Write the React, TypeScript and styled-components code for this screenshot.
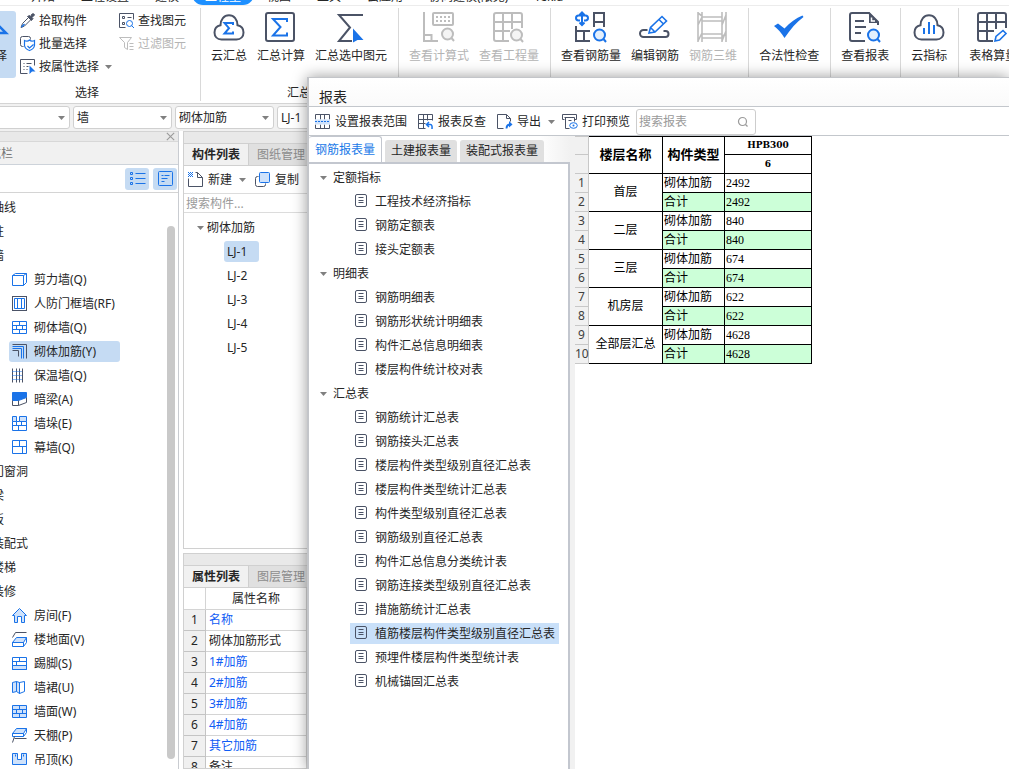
import React from "react";
import styled, { createGlobalStyle, css } from "styled-components";

const ink = "#4b5366";
const blue = "#1a73e8";
const pale = "#cfe2fb";
const mute = "#bdbdbd";

const GlobalStyle = createGlobalStyle`
  * { box-sizing: border-box; }
  body {
    margin: 0;
    background: #fff;
    color: #262626;
    font-family: "Noto Sans", "Noto Sans CJK SC", sans-serif;
    font-size: 12px;
    line-height: 16px;
  }
  button, input, select { font: inherit; color: inherit; }
  button { border: 0; padding: 0; background: none; white-space: nowrap; }
  button:disabled { color: #b4b4b4; }
  ul { list-style: none; margin: 0; padding: 0; }
  svg { display: block; flex: none; overflow: visible; }
`;

/* ---------- icons ---------- */

const cloud = (
  <path d="M9.500 28.500C5 28.500 2.500 25.300 2.500 21.500C2.500 17.500 5 15 8.500 14.300C8.500 8.300 12 4.300 17 4.300C22 4.300 25.500 8.300 25.500 14.300C29 15 31.500 17.500 31.500 21.500C31.500 25.300 29 28.500 24.500 28.500Z" />
);

const large: Record<string, React.ReactNode> = {
  cloudSum: (
    <g stroke={ink} strokeWidth="2">
      {cloud}
      <path stroke={blue} d="M21 14V12H12.500L17 17.200L12.500 22.500H21V20.500" />
    </g>
  ),
  sum: (
    <g stroke={ink} strokeWidth="2">
      <rect x="2" y="2" width="28" height="28" rx="2" />
      <path stroke={blue} d="M23 11V8H9L16.500 16L9 24.500H23V21.500" />
    </g>
  ),
  sumPick: (
    <g stroke={ink} strokeWidth="2">
      <path d="M29 4H5L16 16.500L5 30H18" />
      <path stroke="none" fill={blue} d="M19 17.500L29.500 29H23.500L19 31.500Z" />
    </g>
  ),
  formula: (
    <g stroke={mute} strokeWidth="2">
      <path d="M2 1V30H16M2 24H9.500V30" />
      <rect x="11" y="2" width="20" height="12" rx="1" />
      <path strokeDasharray="2 2" d="M14 6H29M14 10H29" />
      <circle cx="25.500" cy="23" r="5.500" fill="#f4f4f4" />
      <path d="M29.500 27L32 30" />
    </g>
  ),
  quantity: (
    <g stroke={mute} strokeWidth="2">
      <path d="M17 30H4A2 2 0 0 1 2 28V4A2 2 0 0 1 4 2H28A2 2 0 0 1 30 4V17M2 11H30M2 20H18M11 2V30M20 2V18" />
      <circle cx="24.500" cy="24" r="5.500" fill="#f4f4f4" />
      <path d="M28.500 28L31 31" />
    </g>
  ),
  rebar: (
    <g stroke={ink} strokeWidth="2">
      <path d="M2 15V30H16M2 20H16M10 20V30M20 16V2H30V16M20 11H30" />
      <path stroke={blue} d="M6 9.500H4.500A2.500 2.500 0 0 1 4.500 4.500H11.500A2.500 2.500 0 0 1 11.500 9.500H10M8 2V13M5.500 4L8 1.500L10.500 4M5.500 11.500L8 14L10.500 11.500" />
      <circle stroke={blue} cx="25.500" cy="24" r="5.500" fill="#e3effd" />
      <path stroke={blue} d="M29.500 28L32 31" />
    </g>
  ),
  editRebar: (
    <g stroke={ink} strokeWidth="2">
      <path d="M9.500 19H5.500A3.200 3.200 0 0 0 5.500 26H27.500A3 3 0 0 0 27.500 20H25.500" />
      <path stroke={blue} fill="#fff" strokeWidth="1.600" d="M11 22L12.500 16.500L24 5.500L28.500 10L17 21ZM21 8.500L25.500 13M12.500 16.500L17 21" />
    </g>
  ),
  rebar3d: (
    <g stroke={mute} strokeWidth="1.600">
      <path d="M2 1V31M6 1V31M26 1V31M30 1V31M6 6H26M6 10H26M6 23H26M6 27H26M2 14L6 6M2 30L6 22M26 14L30 4M26 30L30 20M6 5L2 2M30 22L26 26" />
    </g>
  ),
  check: <path fill={blue} d="M2 15L6 12.500L12.500 17.500C18 11.500 24 7 30.500 4.500L31.500 6C24.500 11 18.500 18 12.500 27C9.500 22 6 18 2 15Z" />,
  report: (
    <g stroke={ink} strokeWidth="2">
      <path d="M17 30H4A2 2 0 0 1 2 28V4A2 2 0 0 1 4 2H21L30 11V14M7 10H16M7 16H18M7 22H13" />
      <path fill={ink} stroke="none" d="M21 1L31 12H21Z" />
      <path stroke="#fff" strokeWidth="1.500" d="M23.500 6.500V10H27" />
      <circle stroke={blue} cx="25.500" cy="24" r="5.500" fill="#e3effd" />
      <path stroke={blue} d="M29.500 28L32 31" />
    </g>
  ),
  cloudIndex: (
    <g stroke={ink} strokeWidth="2">
      {cloud}
      <path stroke={blue} d="M12 17V23M17 11V23M22 14V23" />
    </g>
  ),
  sheet: (
    <g stroke={ink} strokeWidth="2">
      <path d="M17 30H4A2 2 0 0 1 2 28V4A2 2 0 0 1 4 2H28A2 2 0 0 1 30 4V17M2 11H30M2 20H18M11 2V30M20 2V18" />
      <path stroke={blue} fill="#fff" strokeWidth="1.600" d="M19 30L20 25.500L27 19.500L30 22.500L23.500 29Z" />
    </g>
  ),
  pointer: <path stroke={blue} strokeWidth="2.500" d="M8 2L28 22H17L8 30Z" />,
};

const brick = "M1 2H15V14H1ZM1 6H15M1 10H15M8 2V6M5 6V10M11 6V10M8 10V14";

const small: Record<string, React.ReactNode> = {
  dropper: (
    <g stroke={ink}>
      <path fill={ink} d="M8 4L10 3L11 4L12.500 1.500Q14.500 0.500 15 2.500L12.500 5L13.500 6L12 8Z" />
      <path d="M9 5L3 11L1.500 15L5 13.500L11 7.500" />
      <path stroke={blue} strokeWidth="1.500" d="M2 14.500L5 11.500" />
    </g>
  ),
  batch: (
    <g>
      <path stroke={ink} d="M4 11H3A2 2 0 0 1 1 9V3A2 2 0 0 1 3 1H9A2 2 0 0 1 11 3V4" />
      <path stroke={blue} strokeWidth="1.200" d="M5 5Q8 6.500 10 4.500Q12 6.500 15 5V10Q14.500 13.500 10 15Q5.500 13.500 5 10ZM8 10.500L10 12.500L14 9" />
    </g>
  ),
  byProp: (
    <g stroke={ink}>
      <path d="M8 15H1V1H15V7M4 5H5M7 5H12M4 8H5M7 8H9M4 11H5M7 11H8" />
      <path fill={blue} stroke="none" d="M10 7L16 13H12.500L10 15.500Z" />
    </g>
  ),
  find: (
    <g stroke={ink}>
      <path d="M7 15H1V1H15V7M4 4H6V6H4ZM9 5H13M4 10H6V12H4Z" />
      <circle cx="11" cy="11" r="3" stroke={blue} />
      <path stroke={blue} d="M13 13L15.500 15.500" />
    </g>
  ),
  filter: <path stroke={mute} d="M1 2H13L9 7V14L6 12V7ZM11 8H15M11 11H15M11 14H15" />,
  range: (
    <g stroke={ink}>
      <path d="M1 6V1H15V6M6 1V6M10 1V6M1 11V15H15V11M6 11V15M10 11V15" />
      <path fill={pale} stroke="none" d="M0.500 6H15.500V11H0.500Z" />
      <path stroke={blue} strokeDasharray="2 1" d="M0.500 8H15.500" />
    </g>
  ),
  lookback: (
    <g stroke={ink}>
      <path d="M8 15H1V1H15V7M1 6H15M1 10H8M6 1V15M10 1V7" />
      <path stroke={blue} strokeWidth="1.500" d="M9 11H13Q15 11 14.500 15.500M11.500 8.500L9 11L11.500 13.500" />
    </g>
  ),
  exportDoc: (
    <g stroke={ink}>
      <path d="M7 15H1V1H10L14 5V8M10 1V5H14" />
      <path stroke={blue} strokeWidth="1.800" d="M10 15Q10 11.500 13 11" />
      <path fill={blue} d="M12.500 7.500L16 11L12.500 14Z" stroke="none" />
    </g>
  ),
  print: (
    <g stroke={ink}>
      <path d="M3 6H1V1H15V6H13M3 4H13V8M4 4V15H8M7 7H10" />
      <ellipse cx="12" cy="12" rx="3.800" ry="2.800" stroke={blue} fill="#fff" />
      <circle cx="12" cy="12" r="1" fill={blue} stroke="none" />
    </g>
  ),
  newDoc: (
    <g stroke={ink}>
      <path d="M1 7V15H15V6L10 1H8M10 1V6H15" />
      <path stroke={blue} strokeDasharray="1 1" d="M0.500 1H5.500M1.500 2H5.500M0.500 3H5.500M1.500 4H5.500M0.500 5H5.500" />
    </g>
  ),
  copy: (
    <g>
      <path stroke={ink} d="M4 5H3A2 2 0 0 0 1 7V13A2 2 0 0 0 3 15H9A2 2 0 0 0 11 13V12" />
      <rect x="5" y="1" width="10" height="10" rx="1" stroke={blue} fill={pale} />
    </g>
  ),
  lens: (
    <g stroke="#9a9a9a" strokeWidth="1.200">
      <circle cx="7" cy="8" r="4" />
      <path d="M10 11L12 13" />
    </g>
  ),
  leaf: (
    <g stroke={ink}>
      <rect x="3" y="1" width="11" height="12" rx="1.500" />
      <path d="M6 4H11M6 7H11M6 9H11" />
    </g>
  ),
  list: <path stroke={blue} d="M6 3H16M6 8H16M6 13H16M1 2H3V4H1ZM1 7H3V9H1ZM1 12H3V14H1Z" />,
  detail: (
    <g stroke={blue}>
      <rect x="1" y="1" width="14" height="14" rx="1" />
      <path d="M4 5H6M7 5H12M4 8H10M4 11H7" />
    </g>
  ),
  shear: <path stroke={blue} d="M1 4H12V14H1ZM1 4L4 2H15V11L12 14M12 4L15 2" />,
  doorWall: (
    <g>
      <rect x="1" y="1" width="14" height="14" stroke={ink} />
      <path stroke={blue} d="M3 3H13V13H3ZM6 3V13M10 3V13" />
    </g>
  ),
  brick: <path stroke={blue} d={brick} />,
  tie: (
    <g>
      <path stroke={ink} d="M1 1H15V15M1 7H7V13" />
      <path stroke={blue} d="M1 3H12V15M1 5H10V15" />
    </g>
  ),
  insulate: (
    <g>
      <path stroke={ink} d="M1 1V15M5 1V15M8 1V15M11 1V15" />
      <path stroke={blue} strokeDasharray="1 1" d="M1 4H11M1 8H11M1 12H11" />
    </g>
  ),
  beam: (
    <g>
      <path fill={blue} stroke={blue} d="M1 1H15V6L7 9H1Z" />
      <path stroke={ink} d="M1 9V14H7L15 11V6M7 9V14" />
    </g>
  ),
  pier: (
    <g stroke={blue}>
      <path fill={pale} d="M1 1H5V6H1ZM8 1H15V6H8Z" />
      <path d="M1 6V15H15V6M5 6H8M1 10H15M5 6V10M10 6V10M7 10V15" />
    </g>
  ),
  curtain: <path stroke={blue} d="M1 1H15V14H1ZM1 7H15M8 1V7M11 7V14" />,
  house: <path stroke={blue} fill={pale} d="M1 8L8 1L15 8H13V15H10V9H6V15H3V8Z" />,
  floor: (
    <g>
      <path stroke={ink} d="M1 6L4 1H15" />
      <path stroke={blue} fill={pale} d="M1 11L5 6H15L12 11Z" />
      <path stroke={blue} d="M1 11H12V15H1ZM12 15L15 11V6" />
    </g>
  ),
  skirting: (
    <g stroke={blue}>
      <path fill={pale} d="M1 10H15V14H1Z" />
      <path d="M1 2H15V14H1ZM1 6H15M8 2V6M5 6V10" />
    </g>
  ),
  dado: (
    <g stroke={blue}>
      <path fill={pale} d="M1 3L5 2L8 3V14L5 12L1 13Z" />
      <path d="M5 2V12M8 3L13 2V12L8 14Z" />
    </g>
  ),
  face: <path stroke={blue} fill={pale} d={brick} />,
  ceiling: (
    <g>
      <path stroke={blue} fill={pale} d="M1 6L5 1H15L12 6Z" />
      <path stroke={blue} d="M1 6H12V9H1ZM12 9L15 5V1" />
      <path stroke={ink} d="M3 9L1 15M3 11H15" />
    </g>
  ),
  hung: <path stroke={blue} fill={pale} d="M1 2H6V8H10V2H15V13H1ZM4 3V5M12 3V5" />,
  close: <path stroke="#9a9a9a" strokeWidth="1.500" d="M3 3L13 13M13 3L3 13" />,
};

function Icon({ name, size = 15 }: { name: string; size?: number }) {
  const big = name in large;
  return (
    <svg width={big ? 32 : size} height={big ? 32 : size} viewBox={big ? "1 0 32 32" : "0.5 0.5 15 15"} fill="none" aria-hidden="true">
      {big ? large[name] : small[name]}
    </svg>
  );
}

const CaretSvg = styled.svg`
  margin: 0 -4px 0 2px;
`;
const Caret = () => (
  <CaretSvg width="7" height="4" viewBox="0 0 7 4" aria-hidden="true">
    <path fill="#808080" d="M0 0H7L3.500 4Z" />
  </CaretSvg>
);

/* ---------- shell ---------- */

const Shell = styled.div`
  position: relative;
  display: flex;
  flex-direction: column;
  height: 100vh;
  overflow: hidden;
`;

const MenuBar = styled.nav`
  display: flex;
  align-items: flex-end;
  flex: none;
  height: 6px;
  padding-left: 18px;
  overflow: hidden;
  border-bottom: 1px solid #ececec;
`;

const MenuItem = styled.button<{ $active?: boolean }>`
  flex: none;
  height: 22px;
  padding: 6px 13px 0;
  ${(p) => p.$active && css`
    border-radius: 11px;
    background: #1e90ff;
    color: #fff;
  `}
`;

const Ribbon = styled.header`
  display: flex;
  flex: none;
  height: 98px;
  padding: 2px 0;
  overflow: hidden;
  border-bottom: 1px solid #d4d4d4;
`;

const RibbonGroup = styled.section<{ $first?: boolean }>`
  display: flex;
  flex-direction: column;
  flex: none;
  padding: 0 11px 0 10px;
  border-right: 1px solid #d9d9d9;
  ${(p) => p.$first && css`
    width: 227px;
    margin-left: -26px;
    padding: 0;
  `}
`;

const RibbonButtons = styled.div`
  display: flex;
  flex: 1;
  gap: 10px;
`;

const RibbonCaption = styled.div`
  height: 16px;
  text-align: center;
`;

const BigButton = styled.button<{ $selected?: boolean }>`
  display: flex;
  flex-direction: column;
  align-items: center;
  gap: 5px;
  height: 67px;
  margin-top: 3px;
  ${(p) => p.$selected && css`
    width: 42px;
    border-radius: 3px;
    background: #c5dbf3;
  `}
`;

const SmallGrid = styled.div`
  display: grid;
  grid-template-columns: 99px auto;
  grid-auto-rows: 23px;
  margin-left: -6px;
  padding-top: 1px;
`;

const SmallButton = styled.button`
  display: flex;
  align-items: center;
  gap: 4px;
`;

const ComboRow = styled.div`
  display: flex;
  flex: none;
  gap: 3px;
  height: 27px;
  padding: 2px 0;
  margin-left: -29px;
  background: #f1f1f1;
`;

const Combo = styled.label`
  display: grid;
  align-items: center;
  flex: none;
  width: 99px;
  border: 1px solid #d0d0d0;
  border-radius: 3px;
  background: #fff;

  select {
    grid-area: 1 / 1;
    appearance: none;
    height: 20px;
    padding: 0 3px;
    border: 0;
    background: none;
  }
  svg {
    grid-area: 1 / 1;
    justify-self: end;
    margin: 0 4px 0 0;
    pointer-events: none;
  }
`;

const Workspace = styled.main`
  display: flex;
  flex: 1;
  gap: 4px;
  min-height: 0;
`;

/* ---------- navigation ---------- */

const Nav = styled.aside`
  display: flex;
  flex-direction: column;
  flex: none;
  width: 179px;
  border-top: 1px solid #d4d4d4;
  border-right: 1px solid #c9ccd1;
`;

const NavStrip = styled.div`
  display: flex;
  justify-content: flex-end;
  align-items: center;
  flex: none;
  height: 10px;
  padding-right: 2px;
  background: #e9e9e9;
  border-bottom: 1px solid #d8d8d8;
`;

const NavTitle = styled.div`
  flex: none;
  height: 23px;
  padding-top: 4px;
  background: #f1f1f1;
  border-bottom: 1px solid #cdd3da;
  color: #777;
`;

const Offscreen = styled.span<{ $by: number }>`
  margin-left: -${(p) => p.$by}px;
`;

const NavTools = styled.div`
  display: flex;
  justify-content: flex-end;
  align-items: center;
  flex: none;
  gap: 4px;
  height: 28px;
  padding-right: 1px;
  border-bottom: 1px solid #d4d4d4;
`;

const ToggleButton = styled.button`
  display: grid;
  place-items: center;
  width: 24px;
  height: 22px;
  border-radius: 3px;
  background: #c5dbf3;
`;

const NavScroll = styled.div`
  display: flex;
  flex: 1;
  justify-content: space-between;
  min-height: 0;
  padding: 3px 3px 0 0;
  overflow: hidden;
`;

const NavGroup = styled.li`
  line-height: 24px;
  white-space: nowrap;
`;

const LeafList = styled.ul`
  display: flex;
  flex-direction: column;
  gap: 3px;
  padding: 1px 0 2px;
`;

const NavLeaf = styled.li<{ $selected?: boolean }>`
  display: flex;
  align-items: center;
  gap: 7px;
  min-width: 111px;
  height: 21px;
  margin-left: 9px;
  padding: 0 4px 0 3px;
  border-radius: 3px;
  background: ${(p) => (p.$selected ? "#c5dbf3" : "transparent")};
  white-space: nowrap;
`;

const ScrollThumb = styled.div`
  width: 8px;
  margin: 30px 0 10px;
  border-radius: 4px;
  background: #c9c9c9;
`;

/* ---------- middle panels ---------- */

const Column = styled.div`
  display: flex;
  flex: 1;
  flex-direction: column;
  gap: 4px;
  min-width: 0;
`;

const Panel = styled.section<{ $share: number }>`
  display: flex;
  flex-direction: column;
  flex: ${(p) => p.$share} 1 0;
  min-height: 0;
  overflow: hidden;
  border: 1px solid #d0d0d0;
`;

const PanelStrip = styled.div`
  flex: none;
  height: 12px;
  background: #e9e9e9;
  border-bottom: 1px solid #d0d0d0;
`;

const PanelTabs = styled.div`
  display: flex;
  flex: none;
  height: 22px;
  background: #e0e0e0;
  border-bottom: 1px solid #d0d0d0;
`;

const PanelTab = styled.button<{ $active?: boolean }>`
  padding: 0 8px;
  border-right: 1px solid #cfcfcf;
  color: ${(p) => (p.$active ? "#262626" : "#8c8c8c")};
  font-weight: ${(p) => (p.$active ? 700 : 400)};
  background: ${(p) => (p.$active ? "#f1f1f1" : "#e0e0e0")};
`;

const PanelTools = styled.div`
  display: flex;
  flex: none;
  gap: 13px;
  height: 28px;
  padding-left: 4px;
  border-bottom: 1px solid #dcdcdc;
`;

const ToolButton = styled.button`
  display: flex;
  align-items: center;
  gap: 5px;
`;

const ComponentSearch = styled.input`
  flex: none;
  height: 19px;
  padding: 0 2px;
  border: 0;
  border-bottom: 1px solid #dcdcdc;
  outline: 0;
  &::placeholder { color: #9a9a9a; }
`;

const ComponentTree = styled.ul`
  padding: 3px 0 0 11px;
  line-height: 24px;

  ul { padding-left: 29px; }
`;

const TreeHead = styled.div`
  display: flex;
  align-items: center;
  gap: 7px;
`;

const ComponentLeaf = styled.li<{ $selected?: boolean }>`
  width: 35px;
  height: 21px;
  padding-left: 3px;
  border-radius: 3px;
  line-height: 21px;
  background: ${(p) => (p.$selected ? "#c5dbf3" : "transparent")};
`;

const PropTable = styled.table`
  width: 100%;
  border-spacing: 0;

  th, td {
    height: 21px;
    padding: 0 3px;
    border-bottom: 1px solid #d4d4d4;
    border-right: 1px solid #d4d4d4;
    font-weight: 400;
    text-align: left;
    white-space: nowrap;
  }
  thead th { height: 22px; }
  th:first-child { width: 22px; padding: 0; text-align: center; }
  tbody th { background: #f0f0f0; border-color: #c4c4c4; }
  thead th:nth-child(2) { width: 101px; text-align: center; }
`;

const PropName = styled.td<{ $plain?: boolean }>`
  color: ${(p) => (p.$plain ? "#262626" : "#0f5cf5")};
`;

/* ---------- report window ---------- */

const Dialog = styled.div`
  position: absolute;
  top: 77px;
  right: 0;
  bottom: 0;
  left: 307px;
  display: flex;
  flex-direction: column;
  border: solid #c3c5c9;
  border-width: 1px 0 0 2px;
  background: #fff;
  box-shadow: 0 0 14px rgba(0, 0, 0, 0.4);
`;

const DialogTitle = styled.h1`
  flex: none;
  height: 28px;
  margin: 0;
  padding: 0 10px;
  background: linear-gradient(#fff, #fafafa);
  font-size: 14px;
  font-weight: 400;
  line-height: 38px;
`;

const DialogTools = styled.div`
  display: flex;
  align-items: center;
  flex: none;
  gap: 11px;
  height: 30px;
  padding: 1px 0 0 6px;
  border: solid #c3c7cc;
  border-width: 1px 0;
`;

const SearchBox = styled.label`
  display: flex;
  align-items: center;
  width: 120px;
  height: 26px;
  margin-left: -5px;
  padding: 0 4px 0 2px;
  border: 1px solid #cdcdcd;
  border-radius: 3px;

  input {
    flex: 1;
    min-width: 0;
    padding: 0;
    border: 0;
    outline: 0;
  }
  input::placeholder { color: #9a9a9a; }
`;

const DialogBody = styled.div`
  display: flex;
  flex: 1;
  min-height: 0;
`;

const ReportSide = styled.div`
  display: flex;
  flex-direction: column;
  flex: none;
  width: 266px;
  padding-right: 5px;
  background: #f1f1f1;
`;

const ReportTabs = styled.div`
  display: flex;
  align-items: flex-end;
  flex: none;
  gap: 3px;
  height: 26px;
  background: linear-gradient(90deg, #fff 88%, #f1f1f1);
`;

const ReportTab = styled.button<{ $active?: boolean }>`
  height: 22px;
  padding: 0 6px;
  border-radius: 3px 3px 0 0;
  background: #e0e0e0;
  ${(p) => p.$active && css`
    height: 26px;
    border: solid #c3c7cf;
    border-width: 1px 1px 0 0;
    background: #fff;
    color: #1a7ae8;
  `}
`;

const ReportTree = styled.ul`
  flex: 1;
  padding-top: 2px;
  border: solid #c3c7cf;
  border-width: 2px 2px 0 0;
  background: #fff;
  line-height: 24px;
`;

const ReportHead = styled.div`
  display: flex;
  align-items: center;
  gap: 10px;
  padding-left: 9px;
`;

const ReportLeaf = styled.li<{ $selected?: boolean }>`
  display: flex;
  align-items: center;
  gap: 7px;
  width: 209px;
  height: 21px;
  margin-left: 41px;
  padding-left: 3px;
  background: ${(p) => (p.$selected ? "#c9e0f9" : "transparent")};
  white-space: nowrap;
`;

const ReportTable = styled.table`
  align-self: flex-start;
  border-spacing: 0;
  color: #000;
  font-family: "Liberation Serif", "Noto Sans CJK SC", serif;
  line-height: 16px;

  th, td {
    height: 19px;
    padding: 0 1px 1px;
    border: solid #000;
    border-width: 0 1px 1px 0;
    white-space: nowrap;
  }
  thead tr:first-child > * { border-top-width: 1px; }
  thead th {
    font-family: "DejaVu Serif Condensed", "DejaVu Serif", "Noto Sans CJK SC", serif;
    font-size: 10px;
    text-align: center;
  }
  thead th[rowspan] { font-size: 13px; }
`;

const IndexCell = styled.th`
  && {
    width: 14px;
    min-width: 14px;
    max-width: 14px;
    padding: 0;
    border-color: #c8c8c8;
    background: #f1f1f1;
    color: #404040;
    font-family: "Noto Sans", sans-serif;
    font-weight: 400;
    text-align: center;
  }
`;

const FloorCell = styled.th`
  width: 74px;
  font-weight: 400;
  text-align: center;
`;

const DataCell = styled.td<{ $total?: boolean }>`
  background: ${(p) => (p.$total ? "#ccffd8" : "#fff")};
`;

/* ---------- data ---------- */

const menus = ["开始", "工程设置", "建模", "工程量", "视图", "工具", "云应用", "协同建模(限免)", "Tekla"];

type Tool = [icon: string, label: string, disabled?: boolean];
const ribbonGroups: { caption?: string; tools: Tool[] }[] = [
  { caption: "汇总", tools: [["cloudSum", "云汇总"], ["sum", "汇总计算"], ["sumPick", "汇总选中图元"]] },
  { tools: [["formula", "查看计算式", true], ["quantity", "查看工程量", true]] },
  { tools: [["rebar", "查看钢筋量"], ["editRebar", "编辑钢筋"], ["rebar3d", "钢筋三维", true]] },
  { tools: [["check", "合法性检查"]] },
  { tools: [["report", "查看报表"]] },
  { tools: [["cloudIndex", "云指标"]] },
  { tools: [["sheet", "表格算量"]] },
];

const navTree: { name: string; items?: [string, string][] }[] = [
  { name: "轴线" },
  { name: "柱" },
  {
    name: "墙",
    items: [
      ["shear", "剪力墙(Q)"], ["doorWall", "人防门框墙(RF)"], ["brick", "砌体墙(Q)"], ["tie", "砌体加筋(Y)"],
      ["insulate", "保温墙(Q)"], ["beam", "暗梁(A)"], ["pier", "墙垛(E)"], ["curtain", "幕墙(Q)"],
    ],
  },
  { name: "门窗洞" },
  { name: "梁" },
  { name: "板" },
  { name: "装配式" },
  { name: "楼梯" },
  {
    name: "装修",
    items: [
      ["house", "房间(F)"], ["floor", "楼地面(V)"], ["skirting", "踢脚(S)"], ["dado", "墙裙(U)"],
      ["face", "墙面(W)"], ["ceiling", "天棚(P)"], ["hung", "吊顶(K)"],
    ],
  },
];

const props = ["名称", "砌体加筋形式", "1#加筋", "2#加筋", "3#加筋", "4#加筋", "其它加筋", "备注"];

const reportTree = [
  { name: "定额指标", items: ["工程技术经济指标", "钢筋定额表", "接头定额表"] },
  { name: "明细表", items: ["钢筋明细表", "钢筋形状统计明细表", "构件汇总信息明细表", "楼层构件统计校对表"] },
  {
    name: "汇总表",
    items: [
      "钢筋统计汇总表", "钢筋接头汇总表", "楼层构件类型级别直径汇总表", "楼层构件类型统计汇总表",
      "构件类型级别直径汇总表", "钢筋级别直径汇总表", "构件汇总信息分类统计表", "钢筋连接类型级别直径汇总表",
      "措施筋统计汇总表", "植筋楼层构件类型级别直径汇总表", "预埋件楼层构件类型统计表", "机械锚固汇总表",
    ],
  },
];

const floors: [string, number][] = [["首层", 2492], ["二层", 840], ["三层", 674], ["机房层", 622], ["全部层汇总", 4628]];

export default function App() {
  return (
    <Shell>
      <GlobalStyle />
      <MenuBar>
        {menus.map((m) => <MenuItem key={m} $active={m === "工程量"}>{m}</MenuItem>)}
      </MenuBar>

      <Ribbon>
        <RibbonGroup $first>
          <RibbonButtons>
            <BigButton $selected><Icon name="pointer" />选择</BigButton>
            <SmallGrid>
              <SmallButton><Icon name="dropper" />拾取构件</SmallButton>
              <SmallButton><Icon name="find" />查找图元</SmallButton>
              <SmallButton><Icon name="batch" />批量选择</SmallButton>
              <SmallButton disabled><Icon name="filter" />过滤图元</SmallButton>
              <SmallButton><Icon name="byProp" />按属性选择<Caret /></SmallButton>
            </SmallGrid>
          </RibbonButtons>
          <RibbonCaption>选择</RibbonCaption>
        </RibbonGroup>
        {ribbonGroups.map((g, i) => (
          <RibbonGroup key={i}>
            <RibbonButtons>
              {g.tools.map(([icon, label, disabled]) => (
                <BigButton key={label} disabled={disabled}><Icon name={icon} />{label}</BigButton>
              ))}
            </RibbonButtons>
            <RibbonCaption>{g.caption}</RibbonCaption>
          </RibbonGroup>
        ))}
      </Ribbon>

      <ComboRow>
        {["", "墙", "砌体加筋", "LJ-1"].map((v, i) => (
          <Combo key={i}>
            <select aria-label={v || "楼层"} defaultValue={v}><option>{v}</option></select>
            <Caret />
          </Combo>
        ))}
      </ComboRow>

      <Workspace>
        <Nav>
          <NavStrip><button aria-label="关闭"><Icon name="close" size={11} /></button></NavStrip>
          <NavTitle><Offscreen $by={23}>导航栏</Offscreen></NavTitle>
          <NavTools>
            <ToggleButton aria-label="列表"><Icon name="list" /></ToggleButton>
            <ToggleButton aria-label="详情"><Icon name="detail" /></ToggleButton>
          </NavTools>
          <NavScroll>
            <ul>
              {navTree.map((g) => (
                <NavGroup key={g.name}>
                  <Offscreen $by={8}>{g.name}</Offscreen>
                  {g.items && (
                    <LeafList>
                      {g.items.map(([icon, label]) => (
                        <NavLeaf key={label} $selected={icon === "tie"}><Icon name={icon} />{label}</NavLeaf>
                      ))}
                    </LeafList>
                  )}
                </NavGroup>
              ))}
            </ul>
            <ScrollThumb />
          </NavScroll>
        </Nav>

        <Column>
          <Panel $share={419}>
            <PanelStrip />
            <PanelTabs>
              <PanelTab $active>构件列表</PanelTab>
              <PanelTab>图纸管理</PanelTab>
            </PanelTabs>
            <PanelTools>
              <ToolButton><Icon name="newDoc" />新建<Caret /></ToolButton>
              <ToolButton><Icon name="copy" />复制</ToolButton>
            </PanelTools>
            <ComponentSearch aria-label="搜索构件" placeholder="搜索构件..." />
            <ComponentTree>
              <li>
                <TreeHead><Caret />砌体加筋</TreeHead>
                <LeafList>
                  {[1, 2, 3, 4, 5].map((n) => <ComponentLeaf key={n} $selected={n === 1}>LJ-{n}</ComponentLeaf>)}
                </LeafList>
              </li>
            </ComponentTree>
          </Panel>
          <Panel $share={215}>
            <PanelStrip />
            <PanelTabs>
              <PanelTab $active>属性列表</PanelTab>
              <PanelTab>图层管理</PanelTab>
            </PanelTabs>
            <PropTable>
              <thead><tr><th /><th>属性名称</th><th /></tr></thead>
              <tbody>
                {props.map((p, i) => (
                  <tr key={p}>
                    <th>{i + 1}</th>
                    <PropName $plain={i === 1 || i === 7}>{p}</PropName>
                    <td />
                  </tr>
                ))}
              </tbody>
            </PropTable>
          </Panel>
        </Column>
      </Workspace>

      <Dialog role="dialog" aria-labelledby="report-title">
        <DialogTitle id="report-title">报表</DialogTitle>
        <DialogTools>
          <ToolButton><Icon name="range" />设置报表范围</ToolButton>
          <ToolButton><Icon name="lookback" />报表反查</ToolButton>
          <ToolButton><Icon name="exportDoc" />导出<Caret /></ToolButton>
          <ToolButton><Icon name="print" />打印预览</ToolButton>
          <SearchBox>
            <input aria-label="搜索报表" placeholder="搜索报表" />
            <Icon name="lens" />
          </SearchBox>
        </DialogTools>
        <DialogBody>
          <ReportSide>
            <ReportTabs>
              <ReportTab $active>钢筋报表量</ReportTab>
              <ReportTab>土建报表量</ReportTab>
              <ReportTab>装配式报表量</ReportTab>
            </ReportTabs>
            <ReportTree>
              {reportTree.map((g) => (
                <li key={g.name}>
                  <ReportHead><Caret />{g.name}</ReportHead>
                  <LeafList>
                    {g.items.map((r) => (
                      <ReportLeaf key={r} $selected={r.startsWith("植筋")}><Icon name="leaf" />{r}</ReportLeaf>
                    ))}
                  </LeafList>
                </li>
              ))}
            </ReportTree>
          </ReportSide>
          <ReportTable>
            <colgroup>
              <col style={{ width: 14 }} />
              <col style={{ width: 74 }} />
              <col style={{ width: 62 }} />
              <col style={{ width: 87 }} />
            </colgroup>
            <thead>
              <tr>
                <IndexCell />
                <th rowSpan={2}>楼层名称</th>
                <th rowSpan={2}>构件类型</th>
                <th>HPB300</th>
              </tr>
              <tr><IndexCell /><th>6</th></tr>
            </thead>
            <tbody>
              {floors.map(([name, qty], i) => (
                <React.Fragment key={name}>
                  <tr>
                    <IndexCell>{i * 2 + 1}</IndexCell>
                    <FloorCell rowSpan={2}>{name}</FloorCell>
                    <DataCell>砌体加筋</DataCell>
                    <DataCell>{qty}</DataCell>
                  </tr>
                  <tr>
                    <IndexCell>{i * 2 + 2}</IndexCell>
                    <DataCell $total>合计</DataCell>
                    <DataCell $total>{qty}</DataCell>
                  </tr>
                </React.Fragment>
              ))}
            </tbody>
          </ReportTable>
        </DialogBody>
      </Dialog>
    </Shell>
  );
}
